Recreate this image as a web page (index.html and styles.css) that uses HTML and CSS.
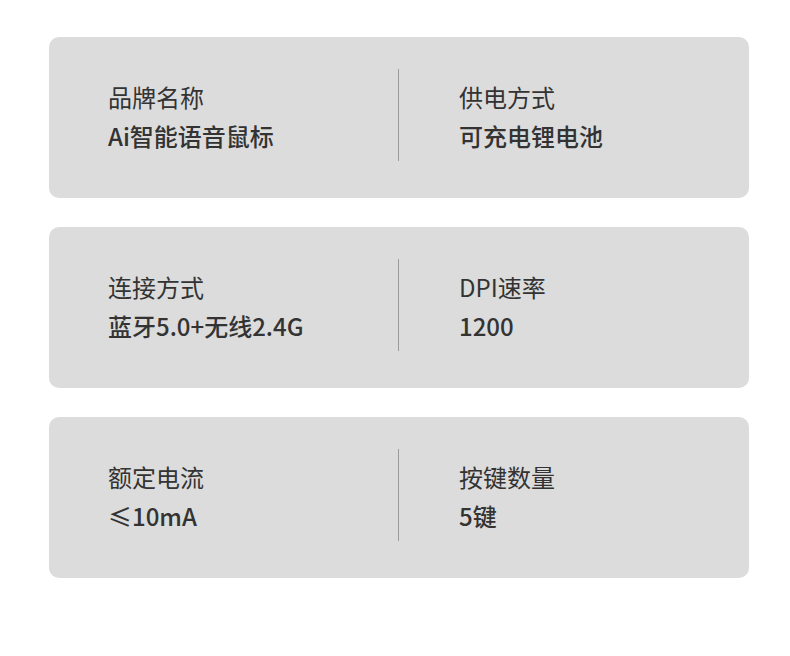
FILE: index.html
```html
<!DOCTYPE html>
<html lang="zh">
<head>
<meta charset="utf-8">
<link rel="stylesheet" href="styles.css">
</head>
<body>
<div class="list">
  <div class="card">
    <div class="col">
      <div class="label">品牌名称</div>
      <div class="value">Ai智能语音鼠标</div>
    </div>
    <div class="divider"></div>
    <div class="col right">
      <div class="label">供电方式</div>
      <div class="value">可充电锂电池</div>
    </div>
  </div>
  <div class="card">
    <div class="col">
      <div class="label">连接方式</div>
      <div class="value">蓝牙5.0+无线2.4G</div>
    </div>
    <div class="divider"></div>
    <div class="col right">
      <div class="label">DPI速率</div>
      <div class="value">1200</div>
    </div>
  </div>
  <div class="card">
    <div class="col">
      <div class="label">额定电流</div>
      <div class="value">≤10mA</div>
    </div>
    <div class="divider"></div>
    <div class="col right">
      <div class="label">按键数量</div>
      <div class="value">5键</div>
    </div>
  </div>
</div>
</body>
</html>
```
FILE: styles.css
```css
html, body {
  margin: 0;
  padding: 0;
  background: #ffffff;
}
body {
  font-family: "Noto Sans CJK SC", "Noto Sans", sans-serif;
  color: #333333;
}
.list {
  display: flex;
  flex-direction: column;
  gap: 29px;
  padding: 37px 0 0 49px;
  width: 700px;
}
.card {
  display: flex;
  height: 161px;
  background: #dcdcdc;
  border-radius: 10px;
}
.col {
  width: 290px;
  padding-left: 59px;
  padding-bottom: 3px;
  display: flex;
  flex-direction: column;
  justify-content: center;
}
.col.right {
  padding-left: 60px;
}
.divider {
  width: 1px;
  height: 92px;
  margin-top: 32px;
  background: #9a9a9a;
}
.label {
  font-size: 24px;
  line-height: 39px;
  font-weight: 400;
}
.value {
  font-size: 24px;
  line-height: 39px;
  font-weight: 500;
}
```
